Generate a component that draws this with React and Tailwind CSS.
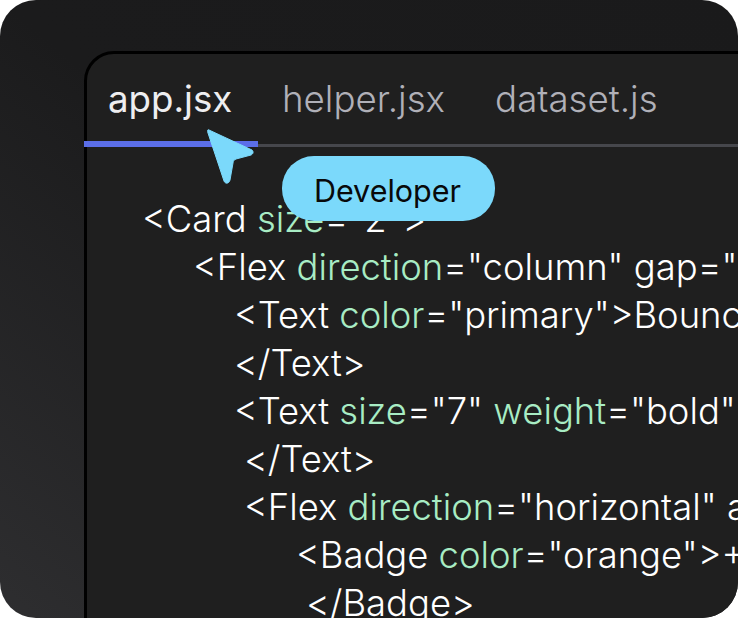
const lines = [
  { pl: "pl-[55px]", parts: [["<Card "], ["size", 1], ['="2">']] },
  { pl: "pl-[106px]", parts: [["<Flex "], ["direction", 1], ['="column" gap="3">']] },
  { pl: "pl-[147px]", parts: [["<Text "], ["color", 1], ['="primary">Bounce rate']] },
  { pl: "pl-[147px]", parts: [["</Text>"]] },
  { pl: "pl-[147px]", parts: [["<Text "], ["size", 1], ['="7" '], ["weight", 1], ['="bold">34%']] },
  { pl: "pl-[157px]", parts: [["</Text>"]] },
  { pl: "pl-[157px]", parts: [["<Flex "], ["direction", 1], ['="horizontal" align="center">']] },
  { pl: "pl-[209px]", parts: [["<Badge "], ["color", 1], ['="orange">+12%']] },
  { pl: "pl-[219px]", parts: [["</Badge>"]] },
];

export default function App() {
  return (
    <div className="relative w-[738px] h-[618px] overflow-hidden bg-white font-['Inter',sans-serif]">
      <div className="relative w-full h-full rounded-[36px] overflow-hidden bg-gradient-to-tr from-[#2e2e30] via-[#1b1b1c] to-[#1a1a1b] pl-[84px] pt-[51px]">
        <div className="w-[700px] h-[600px] bg-[#1f1f1f] border-[3px] border-black rounded-tl-[30px]">
          <div className="h-[87px] flex items-start gap-[50px] pl-[21px] pt-[22px] text-[36.7px] leading-[46px] whitespace-nowrap">
            <span className="text-[#eeeef0] w-[124px]">app.jsx</span>
            <span className="text-[#b0b0b8] font-light">helper.jsx</span>
            <span className="text-[#b0b0b8] font-light">dataset.js</span>
          </div>
          <div className="relative -ml-[3px] h-[6px]">
            <div className="absolute left-0 right-0 bottom-0 h-[3px] bg-[#46474c]" />
            <div className="absolute left-0 top-0 w-[174px] h-[6px] bg-[#5b6ee8]" />
          </div>
          <div className="pt-[48px] text-[36.4px] font-light leading-[48px] text-white whitespace-nowrap overflow-hidden">
            {lines.map((l, i) => (
              <div key={i} className={l.pl}>
                {l.parts.map((p, j) => (
                  <span key={j} className={p[1] ? "text-[#a8ecc4]" : ""}>{p[0]}</span>
                ))}
              </div>
            ))}
          </div>
        </div>
      </div>
      <svg className="absolute left-[205px] top-[127px]" width="50" height="58" viewBox="0 0 50 58">
        <path d="M4 3 L47 23 C49 25 48 27 46 28 L31 32 C29 33 28 34 28 36 L25 53 C24 57 20 57 19 54 L3 6 C2 3 3 2 4 3 Z" fill="#7bd9fb" stroke="#7bd9fb" strokeWidth="1" strokeLinejoin="round" />
      </svg>
      <div className="absolute left-[282px] top-[156px] w-[213px] h-[65px] rounded-[32px] bg-[#7bd9fb] flex items-center justify-center pt-[4px] pr-[2px] text-[30.5px] text-[#08090a]">
        Developer
      </div>
    </div>
  );
}
